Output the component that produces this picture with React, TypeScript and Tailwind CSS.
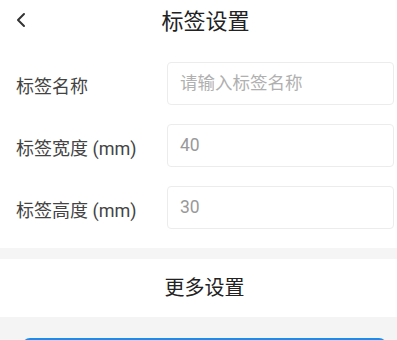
import { ChevronLeft } from 'lucide-react'

const fields = [
  { label: '标签名称', placeholder: '请输入标签名称', value: '' },
  { label: '标签宽度 (mm)', placeholder: '', value: '40' },
  { label: '标签高度 (mm)', placeholder: '', value: '30' },
]

export default function App() {
  return (
    <div
      className="w-[397px] h-[340px] overflow-hidden bg-white text-[#333]"
      style={{ fontFamily: "Roboto, 'Noto Sans CJK SC', sans-serif" }}
    >
      {/* Header */}
      <div className="relative flex items-center justify-center h-[42px]">
        <ChevronLeft size={24} strokeWidth={2} className="absolute left-[9px] top-[8px] text-[#333]" />
        <span className="text-[22px] text-[#222] ml-[14px]">标签设置</span>
      </div>

      {/* Form */}
      <div className="flex flex-col gap-[19px] pt-[20px] pb-[19px]">
        {fields.map((f) => (
          <div key={f.label} className="flex items-center pl-[16px]">
            <span className="w-[151px] pt-[5px] text-[18px] text-[#444]">{f.label}</span>
            <div className="flex items-center w-[227px] h-[43px] px-[12px] rounded-[4px] border border-[#ececec] text-[17.5px]">
              {f.value ? (
                <span className="text-[#999]">{f.value}</span>
              ) : (
                <span className="text-[#b0b0b0]">{f.placeholder}</span>
              )}
            </div>
          </div>
        ))}
      </div>

      <div className="h-[11px] bg-[#f5f5f5]" />

      <div className="flex items-center justify-center h-[58px]">
        <span className="text-[20px] text-[#222] ml-[12px]">更多设置</span>
      </div>

      {/* Save button, cut off at the bottom */}
      <div className="bg-[#f4f4f4] h-[40px] pt-[21px] pl-[22px] pr-[10px]">
        <div className="h-[44px] rounded-[8px] bg-[#1a8cf0]" />
      </div>
    </div>
  )
}
